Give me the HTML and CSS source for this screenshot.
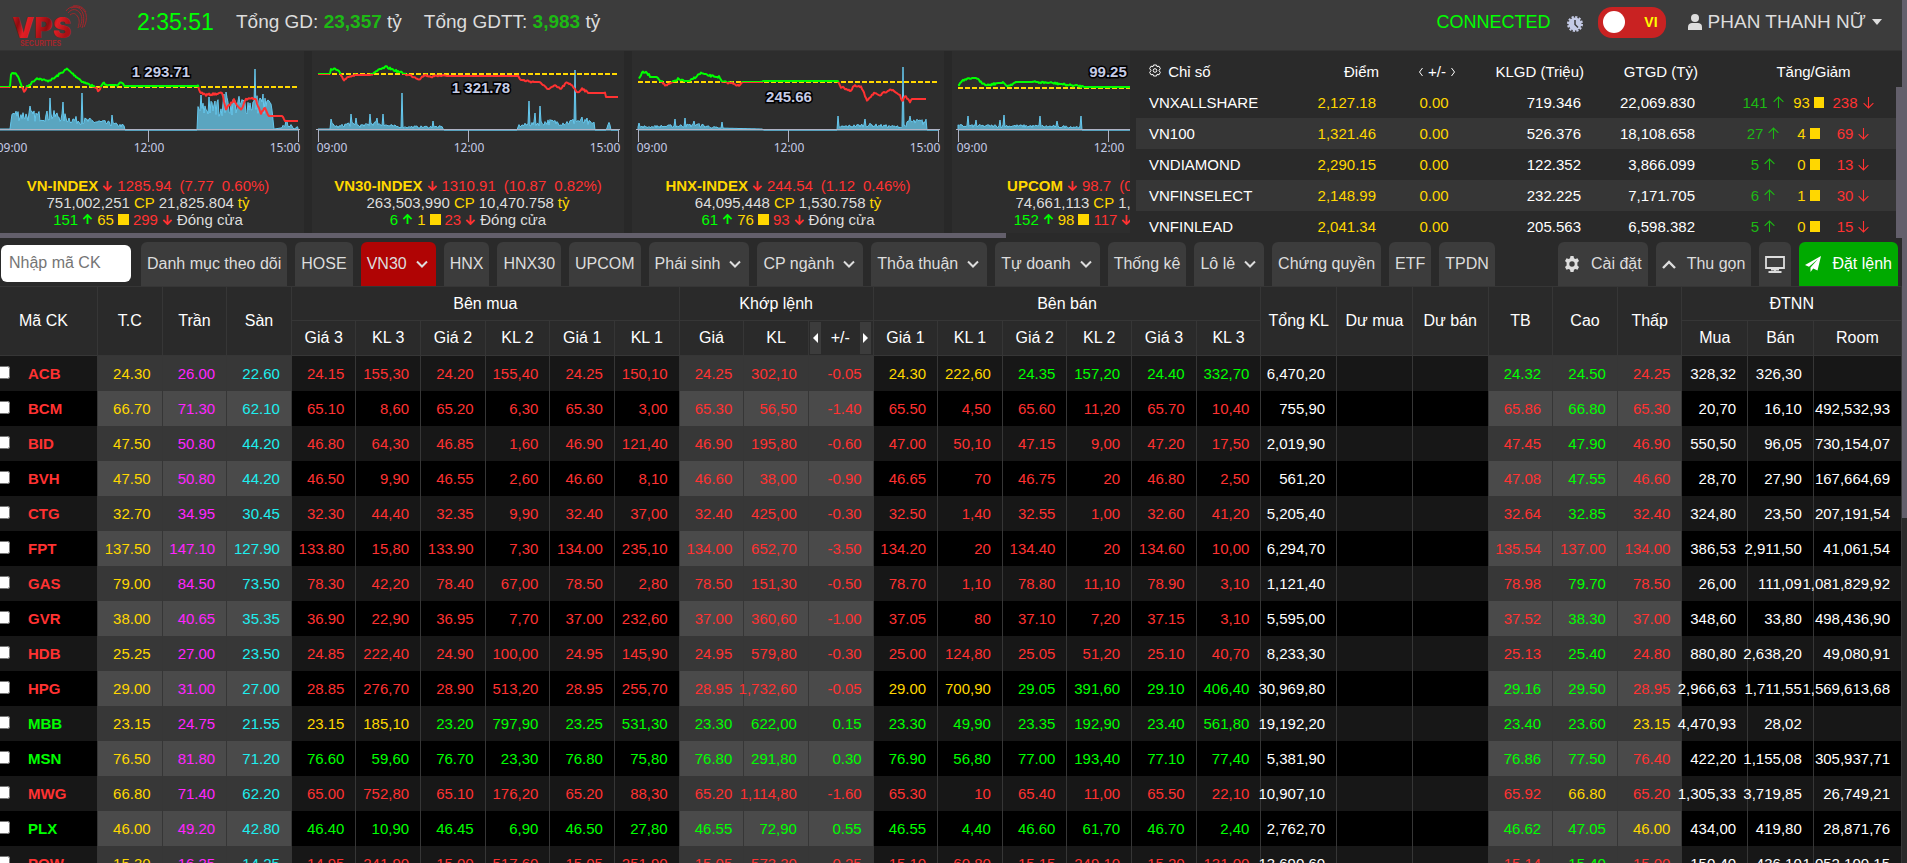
FILE: index.html
```html
<!DOCTYPE html>
<html lang="vi">

<head>
  <meta charset="UTF-8" />
  <meta name="viewport" content="width=device-width, initial-scale=1.0" />
  <title>VPS - Bảng giá</title>
  <link rel="stylesheet" href="styles.css">
</head>

<body>
  <svg class="sprite" aria-hidden="true">
    <symbol id="down" viewBox="0 0 12 12"><path d="M6 1v10M1.5 6.5 6 11l4.500-4.500" /></symbol>
    <symbol id="up" viewBox="0 0 12 12"><path d="M6 11V1M1.500 5.500 6 1l4.500 4.500" /></symbol>
    <symbol id="chevron" viewBox="0 0 12 8"><path d="M1 1.500l5 5 5-5" /></symbol>
  </svg>

  <div class="app">
    <header class="header">
      <a class="logo" href="#" aria-label="VPS Securities">
        <svg width="92" height="44" viewBox="0 4 92 44">
          <defs>
            <linearGradient id="logoRed" x1="0" y1="0" x2="1" y2="0.2">
              <stop offset="0" stop-color="#e31e24" />
              <stop offset="0.17" stop-color="#8d0c10" />
              <stop offset="0.3" stop-color="#e31e24" />
              <stop offset="0.5" stop-color="#c4161b" />
              <stop offset="0.66" stop-color="#8d0c10" />
              <stop offset="0.8" stop-color="#e31e24" />
              <stop offset="1" stop-color="#a81116" />
            </linearGradient>
          </defs>
          <text class="logo-name" x="12" y="38">VPS</text>
          <text class="logo-sub" x="20" y="46">SECURITIES</text>
          <g class="logo-swirl">
            <path d="M66 11c4-6 12-5 15-1 4 5 3 12 1 18" />
            <path d="M68 13c4-5 9-4 12 0 3 5 2 9 0 14" />
            <path d="M71 8c8-3 13 1 15 6 1 5 0 9-2 13" />
            <path d="M70 15c4-3 6-1 8 2 2 4 1 7 0 11" />
            <path d="M73 6c6-1 10 1 13 6" />
          </g>
        </svg>
      </a>
      <time class="clock">2:35:51</time>
      <div class="totals">
        <span>Tổng GD: <b>23,357</b> tỷ</span>
        <span>Tổng GDTT: <b>3,983</b> tỷ</span>
      </div>
      <span class="status">CONNECTED</span>
      <svg class="cog-clock" width="16" height="16" viewBox="0 0 16 16">
        <circle cx="8" cy="8" r="6.500" fill="#c5cbe6" />
        <circle cx="8" cy="8" r="7" fill="none" stroke="#c5cbe6" stroke-width="2" stroke-dasharray="2.200 1.465" />
        <path d="M8 4v4.500l3 3" fill="none" stroke="#3c3c3c" stroke-width="1.500" />
      </svg>
      <label class="lang">
        <input type="checkbox" aria-label="Ngôn ngữ" />
        <span>VI</span>
      </label>
      <button class="user" type="button">
        <svg width="14" height="16" viewBox="0 0 14 16"><circle cx="7" cy="4" r="4" /><path d="M0 16v-3c0-3 2-4 4-4h6c2 0 4 1 4 4v3z" /></svg>
        PHAN THANH NỮ
        <svg width="10" height="6" viewBox="0 0 10 6"><path d="M0 0h10L5 6z" /></svg>
      </button>
    </header>

    <section class="market">
      <div class="charts">
        <div class="cards" id="cards"></div>
        <div class="scroll-x"></div>
      </div>

      <div class="indices">
        <table class="index-table">
          <colgroup>
            <col class="i-name"><col class="i-point"><col class="i-change"><col class="i-volume"><col class="i-value"><col class="i-breadth">
          </colgroup>
          <thead>
            <tr>
              <th class="name">
                <svg width="12" height="13" viewBox="0 0 12 13"><path d="M4.500 1h3l.5 1.700 2-.5 1.300 2.400-1.300 1.900 1.300 1.900L10 10.800l-2-.5-.5 1.700h-3L4 10.300l-2 .5L.7 8.400 2 6.500.7 4.600 2 2.200l2 .5z" /><circle cx="6" cy="6.500" r="1.800" /></svg>
                Chỉ số
              </th>
              <th>Điểm</th>
              <th class="mid">
                <svg width="6" height="10" viewBox="0 0 6 10"><path d="M4.500 1l-3 4 3 4" /></svg>
                +/-
                <svg width="6" height="10" viewBox="0 0 6 10"><path d="M1.500 1l3 4-3 4" /></svg>
              </th>
              <th>KLGD (Triệu)</th>
              <th>GTGD (Tỷ)</th>
              <th class="mid updown">Tăng/Giảm</th>
            </tr>
          </thead>
          <tbody id="indexRows"></tbody>
        </table>
        <div class="scroll-y"></div>
      </div>
    </section>

    <nav class="toolbar">
      <input class="search" type="text" placeholder="Nhập mã CK" aria-label="Nhập mã CK" />
      <button type="button">Danh mục theo dõi</button>
      <button type="button">HOSE</button>
      <button type="button" class="drop active">VN30 <svg><use href="#chevron" /></svg></button>
      <button type="button">HNX</button>
      <button type="button">HNX30</button>
      <button type="button">UPCOM</button>
      <button type="button" class="drop">Phái sinh <svg><use href="#chevron" /></svg></button>
      <button type="button" class="drop">CP ngành <svg><use href="#chevron" /></svg></button>
      <button type="button" class="drop">Thỏa thuận <svg><use href="#chevron" /></svg></button>
      <button type="button" class="drop">Tự doanh <svg><use href="#chevron" /></svg></button>
      <button type="button">Thống kê</button>
      <button type="button" class="drop">Lô lẻ <svg><use href="#chevron" /></svg></button>
      <button type="button">Chứng quyền</button>
      <button type="button">ETF</button>
      <button type="button">TPDN</button>

      <button type="button" class="tool first">
        <svg width="16" height="16" viewBox="0 0 16 16"><path fill="currentColor" fill-rule="evenodd" d="M6.500 0h3l.5 2.200 1.300.8 2.200-.7 1.500 2.600L13.400 6.400v3.200l1.600 1.500-1.500 2.600-2.200-.7-1.300.8-.5 2.200h-3L6 13.800 4.700 13l-2.200.7L1 11.100l1.600-1.500V6.400L1 4.900l1.500-2.600 2.200.7L6 2.200zM8 5.300a2.700 2.700 0 1 0 0 5.400 2.700 2.700 0 0 0 0-5.400z" /></svg>
        Cài đặt
      </button>
      <button type="button" class="tool">
        <svg width="14" height="9" viewBox="0 0 14 9"><path d="M1 8l6-6 6 6" fill="none" stroke="currentColor" stroke-width="2.400" /></svg>
        Thu gọn
      </button>
      <button type="button" class="tool" aria-label="Màn hình">
        <svg width="20" height="17" viewBox="0 0 20 17"><path d="M1 1h18v11H1zM10 12v3M6 13.500h8M3.500 16h13" fill="none" stroke="currentColor" stroke-width="1.800" /></svg>
      </button>
      <button type="button" class="tool order">
        <svg width="16" height="16" viewBox="0 0 16 16"><path fill="currentColor" d="M16 0 0 9l4 1.800L13 3 5.500 11.500V16l2.700-3.400L12.500 14.500z" /></svg>
        Đặt lệnh
      </button>
    </nav>

    <table class="board">
      <colgroup>
        <col class="c-symbol">
        <col span="18" class="c-price">
        <col span="3" class="c-total">
        <col span="3" class="c-price">
        <col class="c-foreign"><col class="c-foreign">
        <col class="c-room">
      </colgroup>
      <thead>
        <tr>
          <th rowspan="2" class="symbol">Mã CK</th>
          <th rowspan="2">T.C</th>
          <th rowspan="2">Trần</th>
          <th rowspan="2">Sàn</th>
          <th colspan="6">Bên mua</th>
          <th colspan="3">Khớp lệnh</th>
          <th colspan="6">Bên bán</th>
          <th rowspan="2">Tổng KL</th>
          <th rowspan="2">Dư mua</th>
          <th rowspan="2">Dư bán</th>
          <th rowspan="2">TB</th>
          <th rowspan="2">Cao</th>
          <th rowspan="2">Thấp</th>
          <th colspan="3">ĐTNN</th>
        </tr>
        <tr>
          <th>Giá 3</th><th>KL 3</th><th>Giá 2</th><th>KL 2</th><th>Giá 1</th><th>KL 1</th>
          <th>Giá</th><th>KL</th>
          <th>
            <div class="switcher">
              <button type="button" aria-label="Trước"><svg width="5" height="10" viewBox="0 0 5 10"><path d="M5 0v10L0 5z" /></svg></button>
              +/-
              <button type="button" aria-label="Sau"><svg width="5" height="10" viewBox="0 0 5 10"><path d="M0 0v10l5-5z" /></svg></button>
            </div>
          </th>
          <th>Giá 1</th><th>KL 1</th><th>Giá 2</th><th>KL 2</th><th>Giá 3</th><th>KL 3</th>
          <th>Mua</th><th>Bán</th><th>Room</th>
        </tr>
      </thead>
      <tbody id="boardRows"></tbody>
    </table>
  </div>
  <div class="page-scroll"><div class="thumb"></div></div>

  <script src="app.js"></script>
</body>

</html>
```
FILE: styles.css
```css
* {
  box-sizing: border-box;
}

body {
  margin: 0;
  display: flex;
  height: 100vh;
  overflow: hidden;
  background: #2a2a2a;
  color: #fff;
  font-family: "Liberation Sans", Arial, sans-serif;
  font-size: 15px;
}

button,
input {
  font-family: inherit;
}

button {
  cursor: pointer;
}

.sprite {
  display: none;
}

.app {
  flex: 1;
  min-width: 0;
}

.page-scroll {
  width: 5px;
  background: #2a2a2a;
}

.page-scroll .thumb {
  height: 60%;
  background: #635f6b;
}

/* header */
.header {
  display: flex;
  align-items: center;
  height: 51px;
  padding: 0 20px 6px 0;
  background: #3c3c3c;
  border-bottom: 1px solid #333;
  font-size: 19px;
  color: #ddd;
}

.logo {
  display: flex;
  align-self: flex-start;
  padding-top: 4px;
  margin-right: 45px;
}

.logo-name {
  font: 900 28px Inter, sans-serif;
  fill: url(#logoRed);
}

.logo-sub {
  font: 700 7px Inter, sans-serif;
  fill: #a3262b;
}

.logo-swirl {
  fill: none;
  stroke: #a3262b;
  stroke-width: 1;
}

.clock {
  width: 99px;
  font-size: 23px;
  color: #0f0;
}

.totals {
  display: flex;
  gap: 22px;
}

.totals b {
  color: #1db914;
}

.status {
  margin-left: auto;
  color: #0f0;
  font-size: 18px;
}

.cog-clock {
  margin: 4px 15px 0 16px;
}

.lang {
  display: flex;
  align-items: center;
  justify-content: space-between;
  width: 68px;
  height: 31px;
  padding: 0 8px 0 5px;
  border-radius: 14px;
  background: #c92222;
  color: #ff0;
  font-size: 14px;
  font-weight: bold;
}

.lang input {
  appearance: none;
  width: 22px;
  height: 22px;
  margin: 0;
  border-radius: 50%;
  background: #fff;
}

.user {
  display: flex;
  align-items: center;
  gap: 6px;
  margin-left: 22px;
  padding: 0;
  border: 0;
  background: none;
  color: #ddd;
  font-size: 19px;
}

.user svg {
  fill: #ddd;
}

/* market overview */
.market {
  display: flex;
  height: 187px;
}

.charts {
  flex: 1;
  min-width: 0;
  overflow: hidden;
}

.cards {
  display: flex;
  gap: 8px;
  height: 182px;
  margin-left: -8px;
  background: #282828;
}

.card {
  flex: none;
  width: 312px;
  padding-top: 7px;
  background: #2d2d2d;
  color: #ddd;
  line-height: 17px;
  text-align: center;
}

.card .chart {
  display: block;
  width: 312px;
  height: 98px;
  margin-bottom: 21px;
}

.card p {
  display: flex;
  justify-content: center;
  gap: 4px;
  margin: 0;
}

.card .arrow {
  align-self: center;
}

.card .pct {
  margin-left: 4px;
}

.chart .axis {
  stroke: #aeb2c4;
  stroke-width: 1;
}

.chart .base {
  stroke: #ffd700;
  stroke-width: 2;
  stroke-dasharray: 5 2;
}

.chart .line {
  fill: none;
  stroke-width: 2;
  stroke-linejoin: round;
}

.chart .line.up {
  stroke: #0f0;
}

.chart .line.down {
  stroke: #ff3232;
}

.chart .volume {
  fill: #5aa5c0;
  stroke: #66c8ee;
  stroke-width: 1;
}

.chart .hour {
  fill: #c5cbe6;
  font: 12px "Noto Sans", sans-serif;
  text-anchor: middle;
}

.chart .ref {
  fill: #c5cbe6;
  stroke: #000;
  stroke-width: 3;
  paint-order: stroke;
  font-size: 15px;
  font-weight: bold;
  text-anchor: middle;
}

.arrow {
  width: 11px;
  height: 11px;
  fill: none;
  stroke: currentColor;
  stroke-width: 2;
}

.square {
  display: inline-block;
  width: 10px;
  height: 11px;
  background: #ffd700;
}

.card .square {
  width: 11px;
  align-self: center;
}

.scroll-x {
  width: 89%;
  height: 5px;
  background: #635f6b;
}

.indices {
  position: relative;
  width: 772px;
  padding: 0 6px;
  overflow: hidden;
}

.scroll-y {
  position: absolute;
  top: 36px;
  right: 0;
  bottom: 0;
  width: 6px;
  background: #635f6b;
}

.index-table {
  width: 100%;
  table-layout: fixed;
  border-spacing: 0;
}

.i-name { width: 130px; }
.i-point { width: 113px; }
.i-change { width: 116px; }
.i-volume { width: 89px; }
.i-value { width: 114px; }
.i-breadth { width: 198px; }

.index-table th {
  height: 36px;
  padding: 4px 0 0;
  font-weight: normal;
  text-align: right;
  white-space: nowrap;
}

.index-table td {
  height: 31px;
  padding: 0 3px 0 0;
  text-align: right;
}

.index-table th.name,
.index-table td:first-child {
  padding-left: 13px;
  text-align: left;
}

.index-table .mid {
  text-align: center;
}

.index-table td.mid {
  padding-right: 6px;
}

.index-table th.updown {
  padding-left: 33px;
}

.index-table th svg {
  fill: none;
  stroke: #fff;
}

.index-table th.name svg {
  margin-right: 3px;
}

.index-table tr:nth-child(even) td {
  background: #363636;
}

.breadth {
  display: grid;
  grid-template-columns: repeat(3, 45px);
  justify-content: center;
  padding-left: 26px;
}

.breadth span {
  display: flex;
  align-items: center;
  justify-content: center;
  gap: 4px;
}

.breadth .arrow {
  width: 13px;
  height: 13px;
  stroke-width: 1;
}

.breadth .green {
  color: #1db914;
}

/* toolbar */
.toolbar {
  display: flex;
  gap: 8px;
  height: 48px;
  padding: 4px 4px 0 1px;
}

.toolbar .search {
  width: 130px;
  height: 37px;
  margin: 3px 2px 0 0;
  padding: 0 8px 2px;
  border: 0;
  border-radius: 6px;
  background: #fff;
  font-size: 16px;
}

.toolbar button {
  padding: 0 6px;
  border: 0;
  border-radius: 6px 6px 0 0;
  background: #3c3c3c;
  color: #ddd;
  font-size: 16px;
  white-space: nowrap;
}

.toolbar .drop,
.toolbar .tool {
  display: flex;
  align-items: center;
  gap: 9px;
}

.toolbar .tool {
  gap: 11px;
}

.toolbar .drop {
  padding-right: 8px;
}

.toolbar .drop svg {
  width: 12px;
  height: 8px;
  fill: none;
  stroke: currentColor;
  stroke-width: 2;
}

.toolbar .active {
  background: #b00404;
}

.toolbar .first {
  margin-left: auto;
}

.toolbar .order {
  background: #0a0;
  color: #fff;
}

/* price board */
.board {
  width: 100%;
  table-layout: fixed;
  border-spacing: 0;
}

.c-symbol { width: 97px; }
.c-price { width: 64px; }
.c-total { width: 75px; }
.c-foreign { width: 65px; }
.c-room { width: 87px; }

.board th {
  height: 35px;
  padding: 0;
  border: solid #363636;
  border-width: 0 1px 1px 0;
  font-size: 16px;
  font-weight: normal;
  white-space: nowrap;
}

.board thead tr:first-child th {
  border-top-width: 1px;
}

.board th.symbol {
  padding-right: 10px;
}

.switcher {
  display: flex;
  align-items: center;
  justify-content: space-between;
  height: 32px;
  padding: 0 2px 0 1px;
}

.switcher button {
  width: 11px;
  height: 100%;
  padding: 0;
  border: 0;
  background: #3c3c3c;
}

.switcher svg {
  fill: #fff;
}

.board td {
  height: 35px;
  padding: 0 11px 0 0;
  border-right: 1px solid #363636;
  background: #171717;
  text-align: right;
  white-space: nowrap;
}

/* long volumes run over the cell on their left */
.board td span {
  display: block;
  margin-left: -40px;
}

.board tr:nth-child(even) td {
  background: #000;
}

.board td.shade {
  background: #373737;
}

.board tr:nth-child(even) td.shade {
  background: #4a4a4a;
}

.board td.symbol {
  padding: 0;
  font-weight: bold;
  text-align: left;
}

.board label {
  display: flex;
  align-items: center;
  gap: 18px;
}

.board label input {
  width: 13px;
  height: 13px;
  margin: 0 0 2px -3px;
}

.red { color: #ff3232; }
.green { color: #0f0; }
.yellow { color: #ffd700; }
.ceil { color: #ff25ff; }
.floor { color: #1eeeee; }
```
FILE: app.js
```js
// line: price points, env: volume envelope, spikes: single volume peaks
const charts = [
  {
    name: 'VN-INDEX', value: '1285.94', diff: '7.77', pct: '0.60%', vol: '751,002,251', val: '21,825.804', n: [151, 65, 299],
    ref: '1 293.71', refAt: [163, 19], base: 29,
    line: '0,29 12,29 13,16 17,15 20,18 23,26 26,34 29,29 39,20 49,23 55,21 63,15 69,11 75,16 85,24 95,28 101,33 105,25 111,27 119,27 123,25 127,28 200,28 202,34 208,37 224,35 228,51 236,42 243,52 248,41 254,40 258,42 263,55 267,50 271,58 284,58 287,63 300,63',
    env: '0,1 12,1 13,12 15,16 30,14 60,14 75,10 100,8 126,4 127,0 199,0 200,20 230,24 260,26 273,22 276,1 283,2 288,7 293,4 296,1 300,3',
    spikes: '32,24 52,32 65,28 84,37 114,15 203,35 211,33 219,28 226,36 228,38 257,61 262,32 265,36 270,30'
  },
  {
    name: 'VN30-INDEX', value: '1310.91', diff: '10.87', pct: '0.82%', vol: '263,503,990', val: '10,470.758', n: [6, 1, 23],
    ref: '1 321.78', refAt: [163, 35], base: 16,
    line: '0,16 12,16 13,12 17,11 21,14 26,22 31,18 38,17 53,17 57,14 68,9 76,12 87,16 94,18 101,21 107,17 115,19 122,17 130,18 200,18 203,22 216,24 222,24 229,31 237,28 243,31 248,25 254,27 260,35 264,30 270,35 287,35 288,39 300,39',
    env: '0,1 12,1 13,6 20,3 30,6 45,4 55,7 72,4 85,3 124,3 126,0 199,0 200,4 215,6 230,8 245,7 260,9 276,6 277,0 288,0 291,8 293,0 300,0',
    spikes: '13,11 33,16 38,12 52,16 59,12 65,16 84,37 115,9 211,29 217,17 222,24 257,60 264,13 269,12'
  },
  {
    name: 'HNX-INDEX', value: '244.54', diff: '1.12', pct: '0.46%', vol: '64,095,448', val: '1,530.758', n: [61, 76, 93],
    ref: '245.66', refAt: [151, 44], base: 24,
    line: '1,20 5,14 9,15 13,19 19,19 23,23 28,28 35,24 40,21 46,23 52,23 56,20 63,15 68,17 74,18 81,19 84,24 95,25 101,28 105,24 123,24 125,23 200,23 203,29 209,31 213,33 216,28 223,29 229,42 236,35 241,38 252,31 262,37 264,43 268,38 272,45 274,41 288,41',
    env: '0,3 40,4 60,5 80,2 124,1 126,0 199,0 200,3 230,5 262,3 266,4 272,8 288,8 289,0 300,0',
    spikes: '1,7 37,11 47,12 56,9 84,8 200,14 227,11 265,63 272,14'
  },
  {
    name: 'UPCOM', value: '98.7', diff: '0.55', pct: '0.55%', vol: '74,661,113', val: '1,006.512', n: [152, 98, 117],
    ref: '99.25', refAt: [150, 19], base: 30,
    line: '0,28 4,23 14,20 19,20 22,24 30,27 40,25 45,25 50,28 58,24 75,24 95,25 110,27 122,28 126,29 300,29',
    env: '0,4 60,4 122,3 124,0 300,0',
    spikes: '10,14 18,10 42,10 46,15 82,14 99,9 123,14'
  }
];

const indices = [
  ['VNXALLSHARE', '2,127.18', '0.00', '719.346', '22,069.830', 141, 93, 238],
  ['VN100', '1,321.46', '0.00', '526.376', '18,108.658', 27, 4, 69],
  ['VNDIAMOND', '2,290.15', '0.00', '122.352', '3,866.099', 5, 0, 13],
  ['VNFINSELECT', '2,148.99', '0.00', '232.225', '7,171.705', 6, 1, 30],
  ['VNFINLEAD', '2,041.34', '0.00', '205.563', '6,598.382', 5, 0, 15]
];

// symbol, ref/ceil/floor | bid 3-2-1 | matched | ask 1-2-3 | total | avg/high/low | foreign buy/sell/room
const stocks = [
  'ACB 24.30 26.00 22.60 24.15 155,30 24.20 155,40 24.25 150,10 24.25 302,10 -0.05 24.30 222,60 24.35 157,20 24.40 332,70 6,470,20 24.32 24.50 24.25 328,32 326,30',
  'BCM 66.70 71.30 62.10 65.10 8,60 65.20 6,30 65.30 3,00 65.30 56,50 -1.40 65.50 4,50 65.60 11,20 65.70 10,40 755,90 65.86 66.80 65.30 20,70 16,10 492,532,93',
  'BID 47.50 50.80 44.20 46.80 64,30 46.85 1,60 46.90 121,40 46.90 195,80 -0.60 47.00 50,10 47.15 9,00 47.20 17,50 2,019,90 47.45 47.90 46.90 550,50 96,05 730,154,07',
  'BVH 47.50 50.80 44.20 46.50 9,90 46.55 2,60 46.60 8,10 46.60 38,00 -0.90 46.65 70 46.75 20 46.80 2,50 561,20 47.08 47.55 46.60 28,70 27,90 167,664,69',
  'CTG 32.70 34.95 30.45 32.30 44,40 32.35 9,90 32.40 37,00 32.40 425,00 -0.30 32.50 1,40 32.55 1,00 32.60 41,20 5,205,40 32.64 32.85 32.40 324,80 23,50 207,191,54',
  'FPT 137.50 147.10 127.90 133.80 15,80 133.90 7,30 134.00 235,10 134.00 652,70 -3.50 134.20 20 134.40 20 134.60 10,00 6,294,70 135.54 137.00 134.00 386,53 2,911,50 41,061,54',
  'GAS 79.00 84.50 73.50 78.30 42,20 78.40 67,00 78.50 2,80 78.50 151,30 -0.50 78.70 1,10 78.80 11,10 78.90 3,10 1,121,40 78.98 79.70 78.50 26,00 111,09 1,081,829,92',
  'GVR 38.00 40.65 35.35 36.90 22,90 36.95 7,70 37.00 232,60 37.00 360,60 -1.00 37.05 80 37.10 7,20 37.15 3,10 5,595,00 37.52 38.30 37.00 348,60 33,80 498,436,90',
  'HDB 25.25 27.00 23.50 24.85 222,40 24.90 100,00 24.95 145,90 24.95 579,80 -0.30 25.00 124,80 25.05 51,20 25.10 40,70 8,233,30 25.13 25.40 24.80 880,80 2,638,20 49,080,91',
  'HPG 29.00 31.00 27.00 28.85 276,70 28.90 513,20 28.95 255,70 28.95 1,732,60 -0.05 29.00 700,90 29.05 391,60 29.10 406,40 30,969,80 29.16 29.50 28.95 2,966,63 1,711,55 1,569,613,68',
  'MBB 23.15 24.75 21.55 23.15 185,10 23.20 797,90 23.25 531,30 23.30 622,00 0.15 23.30 49,90 23.35 192,90 23.40 561,80 19,192,20 23.40 23.60 23.15 4,470,93 28,02',
  'MSN 76.50 81.80 71.20 76.60 59,60 76.70 23,30 76.80 75,80 76.80 291,80 0.30 76.90 56,80 77.00 193,40 77.10 77,40 5,381,90 76.86 77.50 76.40 422,20 1,155,08 305,937,71',
  'MWG 66.80 71.40 62.20 65.00 752,80 65.10 176,20 65.20 88,30 65.20 1,114,80 -1.60 65.30 10 65.40 11,00 65.50 22,10 10,907,10 65.92 66.80 65.20 1,305,33 3,719,85 26,749,21',
  'PLX 46.00 49.20 42.80 46.40 10,90 46.45 6,90 46.50 27,80 46.55 72,90 0.55 46.55 4,40 46.60 61,70 46.70 2,40 2,762,70 46.62 47.05 46.00 434,00 419,80 28,871,76',
  'POW 15.30 16.35 14.25 14.95 241,90 15.00 517,60 15.05 251,90 15.05 573,30 -0.25 15.10 60,80 15.15 249,10 15.20 131,00 13,690,60 15.14 15.40 15.00 150,40 436,10 1,052,100,15'
];

const arrow = (dir) => `<svg class="arrow"><use href="#${dir}" /></svg>`;
const points = (text) => text.split(' ').map((p) => p.split(',').map(Number));

// small repeatable generator so the charts look the same on every load
let seed = 7;
function rand() {
  seed = (seed * 16807) % 2147483647;
  return seed / 2147483647;
}

function interpolate(list, x) {
  for (let i = 1; i < list.length; i++) {
    const [x0, y0] = list[i - 1];
    const [x1, y1] = list[i];
    if (x <= x1) return y0 + (y1 - y0) * Math.max(0, x - x0) / (x1 - x0);
  }
  return list[list.length - 1][1];
}

function pricePath(list) {
  let d = '';
  const last = list[list.length - 1][0];
  for (let x = list[0][0]; x <= last; x++) {
    const y = interpolate(list, x);
    const flat = (x > 127 && x < 200) || Math.abs(interpolate(list, x + 1) - y) < 0.01;
    const noise = flat ? 0 : (rand() - 0.5) * 2;
    d += `${d ? 'L' : 'M'}${x} ${(y + noise).toFixed(1)}`;
  }
  return d;
}

function volumePath(env, spikes) {
  let d = 'M0 72';
  for (let x = 0; x <= 300; x++) {
    const spike = spikes.find((s) => s[0] === x);
    let h = interpolate(env, x);
    if (h > 2) h *= 0.6 + rand() * 0.8;
    if (spike) h = spike[1];
    d += `L${x} ${(72 - h).toFixed(1)}`;
  }
  return d + 'L300 72Z';
}

function drawChart(c, i) {
  const path = pricePath(points(c.line));
  return `
    <svg class="chart" viewBox="-6 0 312 98">
      <clipPath id="above${i}"><rect x="-6" y="0" width="312" height="${c.base}" /></clipPath>
      <clipPath id="below${i}"><rect x="-6" y="${c.base}" width="312" height="60" /></clipPath>
      <path class="volume" d="${volumePath(points(c.env), points(c.spikes))}" />
      <path class="base" d="M0 ${c.base}H300" />
      <path class="line up" d="${path}" clip-path="url(#above${i})" />
      <path class="line down" d="${path}" clip-path="url(#below${i})" />
      <path class="axis" d="M-2 71.5H302M0.5 72v12M150.500 72v12M300.500 72v12" />
      <text class="hour" x="14" y="94">09:00</text>
      <text class="hour" x="151" y="94">12:00</text>
      <text class="hour" x="287" y="94">15:00</text>
      <text class="ref" x="${c.refAt[0]}" y="${c.refAt[1]}">${c.ref}</text>
    </svg>`;
}

document.getElementById('cards').innerHTML = charts.map((c, i) => `
  <div class="card">
    ${drawChart(c, i)}
    <p class="red"><b class="yellow">${c.name}</b>${arrow('down')}<span>${c.value}</span><span class="pct">(${c.diff}</span><span class="pct">${c.pct})</span></p>
    <p>${c.vol} <span class="yellow">CP</span> ${c.val} <span class="yellow">tỷ</span></p>
    <p><span class="green">${c.n[0]}</span><span class="green">${arrow('up')}</span><span class="yellow">${c.n[1]}</span><i class="square"></i><span class="red">${c.n[2]}</span><span class="red">${arrow('down')}</span>Đóng cửa</p>
  </div>`).join('');

document.getElementById('indexRows').innerHTML = indices.map((r) => `
  <tr>
    <td>${r[0]}</td>
    <td class="yellow">${r[1]}</td>
    <td class="yellow mid">${r[2]}</td>
    <td>${r[3]}</td>
    <td>${r[4]}</td>
    <td>
      <div class="breadth">
        <span class="green">${r[5]} ${arrow('up')}</span>
        <span class="yellow">${r[6]} <i class="square"></i></span>
        <span class="red">${r[7]} ${arrow('down')}</span>
      </div>
    </td>
  </tr>`).join('');

function colorOf(price, ref) {
  if (Number(price) === Number(ref)) return 'yellow';
  return Number(price) > Number(ref) ? 'green' : 'red';
}

function cell(text, cls) {
  return `<td class="${cls || ''}"><span>${text || ''}</span></td>`;
}

document.getElementById('boardRows').innerHTML = stocks.map((row) => {
  const v = row.split(' ');
  const ref = v[1];
  let html = `<td class="symbol ${colorOf(v[10], ref)}"><label><input type="checkbox" />${v[0]}</label></td>`;
  html += cell(v[1], 'shade yellow') + cell(v[2], 'shade ceil') + cell(v[3], 'shade floor');
  for (let i = 4; i < 10; i += 2) {
    const color = colorOf(v[i], ref);
    html += cell(v[i], color) + cell(v[i + 1], color);
  }
  const match = 'shade ' + colorOf(v[10], ref);
  html += cell(v[10], match) + cell(v[11], match) + cell(v[12], match);
  for (let i = 13; i < 19; i += 2) {
    const color = colorOf(v[i], ref);
    html += cell(v[i], color) + cell(v[i + 1], color);
  }
  html += cell(v[19]) + cell() + cell();
  for (let i = 20; i < 23; i++) html += cell(v[i], 'shade ' + colorOf(v[i], ref));
  html += cell(v[23]) + cell(v[24]) + cell(v[25]);
  return `<tr>${html}</tr>`;
}).join('');
```
